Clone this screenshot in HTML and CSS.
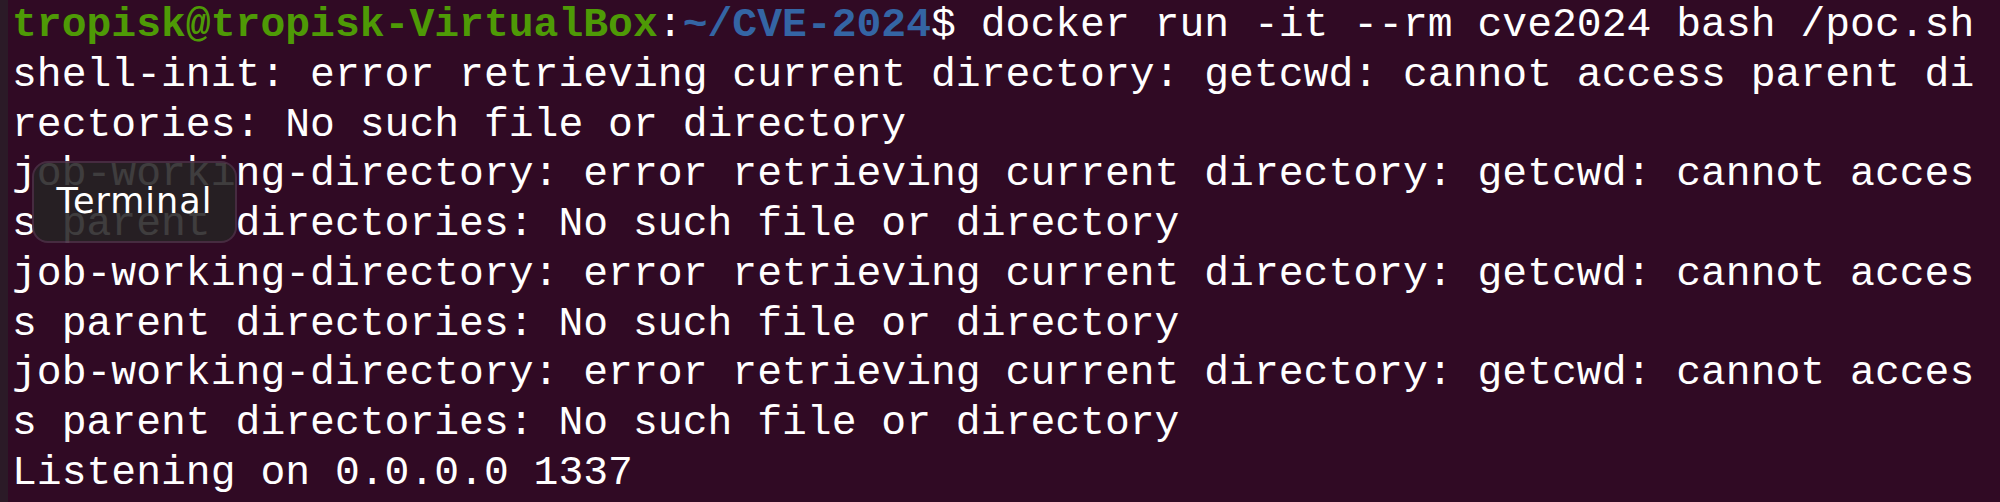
FILE: index.html
```html
<!DOCTYPE html>
<html>
<head>
<meta charset="utf-8">
<link rel="stylesheet" href="styles.css">
</head>
<body>
<div class="window">
  <div class="edge"></div>
  <div class="term">
    <div class="line"><span class="user">tropisk@tropisk-VirtualBox</span>:<span class="path">~/CVE-2024</span>$ docker run -it --rm cve2024 bash /poc.sh</div>
    <div class="line">shell-init: error retrieving current directory: getcwd: cannot access parent di</div>
    <div class="line">rectories: No such file or directory</div>
    <div class="line">job-working-directory: error retrieving current directory: getcwd: cannot acces</div>
    <div class="line">s parent directories: No such file or directory</div>
    <div class="line">job-working-directory: error retrieving current directory: getcwd: cannot acces</div>
    <div class="line">s parent directories: No such file or directory</div>
    <div class="line">job-working-directory: error retrieving current directory: getcwd: cannot acces</div>
    <div class="line">s parent directories: No such file or directory</div>
    <div class="line">Listening on 0.0.0.0 1337</div>
    <div class="tooltip">Terminal</div>
  </div>
</div>
</body>
</html>
```
FILE: styles.css
```css
html, body {
  margin: 0;
  padding: 0;
  background: #300a24;
}
.window {
  display: flex;
  width: 2000px;
  height: 502px;
  overflow: hidden;
  background: #300a24;
}
.edge {
  width: 8px;
  flex: none;
  background: #2b1a27;
}
.term {
  position: relative;
  flex: 1;
  padding: 1px 0 0 4px;
  font-family: "Liberation Mono", monospace;
  font-size: 41.4px;
  line-height: 49.75px;
  color: #ffffff;
}
.line {
  white-space: pre;
  height: 49.75px;
}
.user {
  color: #4e9a06;
  font-weight: bold;
}
.path {
  color: #3465a4;
  font-weight: bold;
}
.tooltip {
  position: absolute;
  left: 24px;
  top: 161px;
  width: 205px;
  height: 82px;
  box-sizing: border-box;
  display: flex;
  align-items: center;
  justify-content: center;
  border-radius: 16px;
  background: rgba(36, 34, 35, 0.88);
  border: 2px solid rgba(110, 60, 100, 0.45);
  font-family: "DejaVu Sans", sans-serif;
  font-size: 35px;
  letter-spacing: 1px;
  line-height: 1;
  color: #ffffff;
  padding-bottom: 2px;
}
```
